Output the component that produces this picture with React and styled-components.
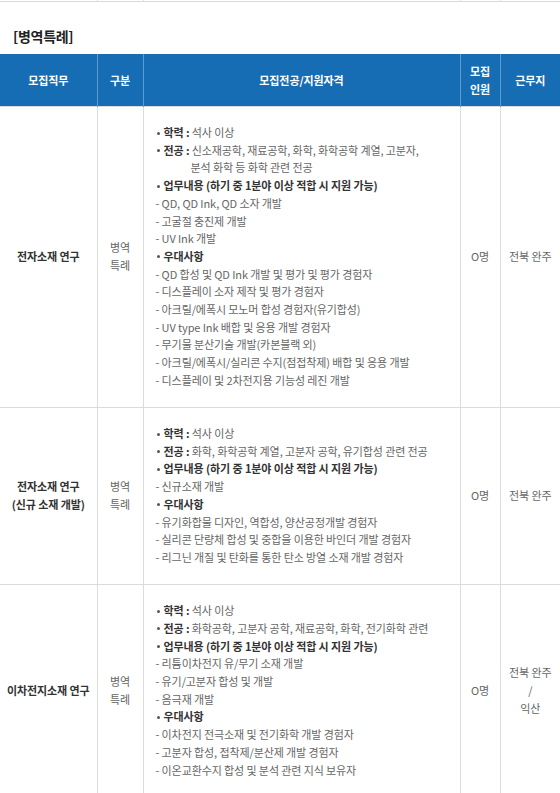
import React from "react";
import styled, { createGlobalStyle } from "styled-components";

const GlobalStyle = createGlobalStyle`
  body {
    margin: 0;
    background: #fff;
    font-family: "Noto Sans CJK KR", "Noto Sans", sans-serif;
  }
`;

const COLS = [97, 46, 317, 40, 60];

const Page = styled.div`
  width: 560px;
  overflow: hidden;
`;

const PrevEdge = styled.div`
  display: grid;
  grid-template-columns: ${COLS.map((c) => c + "px").join(" ")};
  height: 1px;
  border-bottom: 1px solid #d9d9d9;
`;

const EdgeCell = styled.div`
  border-left: ${(p) => (p.first ? "none" : "1px solid #e2e2e2")};
`;

const Title = styled.h3`
  margin: 24px 0 8px;
  padding-left: 13px;
  font-size: 14px;
  line-height: 20px;
  font-weight: 700;
  color: #222;
  letter-spacing: -0.3px;
`;

const Table = styled.table`
  width: 560px;
  table-layout: fixed;
  border-collapse: collapse;
  font-size: 11px;
  letter-spacing: -0.1px;
`;

const HeadCell = styled.th`
  height: 52px;
  padding: 0;
  background: #166db3;
  color: #fff;
  font-weight: 700;
  line-height: 18px;
  text-align: center;
  vertical-align: middle;
  border-left: ${(p) => (p.first ? "none" : "1px solid #5e9bd0")};
`;

const Cell = styled.td`
  padding: 0 2px;
  text-align: center;
  vertical-align: middle;
  line-height: 17.7px;
  color: ${(p) => (p.strong ? "#333" : "#666")};
  font-weight: ${(p) => (p.strong ? 700 : 400)};
  border-top: 1px solid #dcdcdc;
  border-left: ${(p) => (p.first ? "none" : "1px solid #dcdcdc")};
`;

const ContentCell = styled(Cell)`
  text-align: left;
  padding: 17px 4px 17.5px 12px;
`;

const Line = styled.div`
  white-space: nowrap;
  color: #666;
  padding-left: ${(p) => (p.indent ? "35px" : "0")};
`;

const HeadLine = styled(Line)`
  &::before {
    content: "";
    display: inline-block;
    width: 3px;
    height: 3px;
    border-radius: 50%;
    background: #555;
    vertical-align: middle;
    margin: 0 4px 2px 1px;
  }
`;

const Label = styled.b`
  color: #333;
  font-weight: 700;
`;

const rows = [
  {
    job: ["전자소재 연구"],
    place: ["전북 완주"],
    lines: [
      { k: "head", label: "학력 :", text: "석사 이상" },
      { k: "head", label: "전공 :", text: "신소재공학, 재료공학, 화학, 화학공학 계열, 고분자," },
      { k: "cont", text: "분석 화학 등 화학 관련 전공" },
      { k: "head", label: "업무내용 (하기 중 1분야 이상 적합 시 지원 가능)" },
      { k: "sub", text: "QD, QD Ink, QD 소자 개발" },
      { k: "sub", text: "고굴절 충진제 개발" },
      { k: "sub", text: "UV Ink 개발" },
      { k: "head", label: "우대사항" },
      { k: "sub", text: "QD 합성 및 QD Ink 개발 및 평가 및 평가 경험자" },
      { k: "sub", text: "디스플레이 소자 제작 및 평가 경험자" },
      { k: "sub", text: "아크릴/에폭시 모노머 합성 경험자(유기합성)" },
      { k: "sub", text: "UV type Ink 배합 및 응용 개발 경험자" },
      { k: "sub", text: "무기물 분산기술 개발(카본블랙 외)" },
      { k: "sub", text: "아크릴/에폭시/실리콘 수지(점접착제) 배합 및 응용 개발" },
      { k: "sub", text: "디스플레이 및 2차전지용 기능성 레진 개발" },
    ],
  },
  {
    job: ["전자소재 연구", "(신규 소재 개발)"],
    place: ["전북 완주"],
    lines: [
      { k: "head", label: "학력 :", text: "석사 이상" },
      { k: "head", label: "전공 :", text: "화학, 화학공학 계열, 고분자 공학, 유기합성 관련 전공" },
      { k: "head", label: "업무내용 (하기 중 1분야 이상 적합 시 지원 가능)" },
      { k: "sub", text: "신규소재 개발" },
      { k: "head", label: "우대사항" },
      { k: "sub", text: "유기화합물 디자인, 역합성, 양산공정개발 경험자" },
      { k: "sub", text: "실리콘 단량체 합성 및 중합을 이용한 바인더 개발 경험자" },
      { k: "sub", text: "리그닌 개질 및 탄화를 통한 탄소 방열 소재 개발 경험자" },
    ],
  },
  {
    job: ["이차전지소재 연구"],
    place: ["전북 완주", "/", "익산"],
    lines: [
      { k: "head", label: "학력 :", text: "석사 이상" },
      { k: "head", label: "전공 :", text: "화학공학, 고분자 공학, 재료공학, 화학, 전기화학 관련" },
      { k: "head", label: "업무내용 (하기 중 1분야 이상 적합 시 지원 가능)" },
      { k: "sub", text: "리튬이차전지 유/무기 소재 개발" },
      { k: "sub", text: "유기/고분자 합성 및 개발" },
      { k: "sub", text: "음극재 개발" },
      { k: "head", label: "우대사항" },
      { k: "sub", text: "이차전지 전극소재 및 전기화학 개발 경험자" },
      { k: "sub", text: "고분자 합성, 접착제/분산제 개발 경험자" },
      { k: "sub", text: "이온교환수지 합성 및 분석 관련 지식 보유자" },
    ],
  },
];

const Stack = ({ items }) =>
  items.map((t, i) => <div key={i}>{t}</div>);

const Requirement = ({ line }) => {
  if (line.k === "head") {
    return (
      <HeadLine>
        <Label>{line.label}</Label>
        {line.text ? " " + line.text : ""}
      </HeadLine>
    );
  }
  if (line.k === "cont") return <Line indent>{line.text}</Line>;
  return <Line>- {line.text}</Line>;
};

export default function App() {
  return (
    <Page>
      <GlobalStyle />
      <PrevEdge>
        {COLS.map((c, i) => (
          <EdgeCell key={i} first={i === 0} />
        ))}
      </PrevEdge>
      <Title>[병역특례]</Title>
      <Table>
        <colgroup>
          {COLS.map((c, i) => (
            <col key={i} style={{ width: c }} />
          ))}
        </colgroup>
        <thead>
          <tr>
            <HeadCell first>모집직무</HeadCell>
            <HeadCell>구분</HeadCell>
            <HeadCell>모집전공/지원자격</HeadCell>
            <HeadCell>
              모집
              <br />
              인원
            </HeadCell>
            <HeadCell>근무지</HeadCell>
          </tr>
        </thead>
        <tbody>
          {rows.map((row, i) => (
            <tr key={i}>
              <Cell first strong>
                <Stack items={row.job} />
              </Cell>
              <Cell>
                <Stack items={["병역", "특례"]} />
              </Cell>
              <ContentCell>
                {row.lines.map((l, j) => (
                  <Requirement key={j} line={l} />
                ))}
              </ContentCell>
              <Cell>O명</Cell>
              <Cell>
                <Stack items={row.place} />
              </Cell>
            </tr>
          ))}
        </tbody>
      </Table>
    </Page>
  );
}
